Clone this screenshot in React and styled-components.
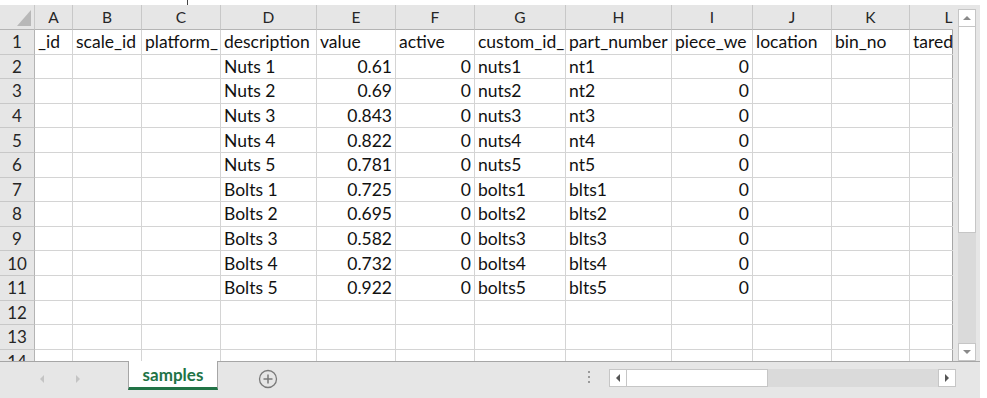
import React from "react";
import styled, { createGlobalStyle } from "styled-components";

const columns = [
  { key: "A", width: 38 },
  { key: "B", width: 69 },
  { key: "C", width: 79 },
  { key: "D", width: 96 },
  { key: "E", width: 79 },
  { key: "F", width: 79 },
  { key: "G", width: 91 },
  { key: "H", width: 106 },
  { key: "I", width: 81 },
  { key: "J", width: 79 },
  { key: "K", width: 78 },
  { key: "L", width: 78 },
];

const headings = ["_id", "scale_id", "platform_", "description", "value", "active", "custom_id_", "part_number", "piece_we", "location", "bin_no", "tared"];

const samples = [
  ["Nuts 1", "0.61", "nuts1", "nt1"],
  ["Nuts 2", "0.69", "nuts2", "nt2"],
  ["Nuts 3", "0.843", "nuts3", "nt3"],
  ["Nuts 4", "0.822", "nuts4", "nt4"],
  ["Nuts 5", "0.781", "nuts5", "nt5"],
  ["Bolts 1", "0.725", "bolts1", "blts1"],
  ["Bolts 2", "0.695", "bolts2", "blts2"],
  ["Bolts 3", "0.582", "bolts3", "blts3"],
  ["Bolts 4", "0.732", "bolts4", "blts4"],
  ["Bolts 5", "0.922", "bolts5", "blts5"],
];

// build every row as 12 cells: {text, num}
const rows = [
  headings.map((t) => ({ text: t })),
  ...samples.map(([desc, val, cid, part]) => [
    {}, {}, {},
    { text: desc },
    { text: val, num: true },
    { text: "0", num: true },
    { text: cid },
    { text: part },
    { text: "0", num: true },
    {}, {}, {},
  ]),
  ...[12, 13, 14].map(() => Array.from({ length: 12 }, () => ({}))),
];

const GlobalStyle = createGlobalStyle`
  body {
    margin: 0;
    background: #fff;
    font-family: Lato, "Open Sans", sans-serif;
  }
`;

const Window = styled.div`
  width: 980px;
  height: 398px;
  display: flex;
  flex-direction: column;
  background: #e6e6e6;
`;

const TopStrip = styled.div`
  height: 5px;
  background: #fff;
  display: flex;
`;

const Caret = styled.span`
  width: 1px;
  height: 5px;
  margin-left: 187px;
  background: #444;
`;

const Body = styled.div`
  height: 356px;
  display: flex;
`;

const Sheet = styled.div`
  width: 953px;
  overflow: hidden;
  background: #fff;
  box-shadow: inset -1px 0 #a6a6a6;
  display: grid;
  grid-template-columns: 35px ${columns.map((c) => c.width + "px").join(" ")};
  grid-template-rows: 25px;
  grid-auto-rows: 24.6px;
  align-content: start;
`;

const Cell = styled.div`
  box-sizing: border-box;
  border-right: 1px solid #d4d4d4;
  border-bottom: 1px solid #d4d4d4;
  padding: 0 3px;
  font-size: 17.5px;
  color: #111;
  white-space: nowrap;
  overflow: hidden;
  display: flex;
  align-items: center;
  justify-content: ${(p) => (p.$num ? "flex-end" : "flex-start")};
`;

const Heading = styled.div`
  box-sizing: border-box;
  background: #e6e6e6;
  border-right: 1px solid #c8c8c8;
  border-bottom: 1px solid #b4b4b4;
  font-size: 15.5px;
  color: #262626;
  display: flex;
  align-items: center;
  justify-content: center;
  overflow: hidden;
`;

const RowNumber = styled(Heading)`
  font-size: 17px;
  border-bottom: 1px solid #c8c8c8;
  border-right: 1px solid #b4b4b4;
`;

const Corner = styled(Heading)`
  justify-content: flex-end;
  align-items: flex-end;
  padding: 0 3px 3px 0;
`;

const VScroll = styled.div`
  width: 27px;
  display: flex;
  flex-direction: column;
  padding: 4px 4px 0 5px;
  box-sizing: border-box;
`;

const ScrollButton = styled.div`
  box-sizing: border-box;
  width: 18px;
  height: 18px;
  background: #fff;
  border: 1px solid #c6c6c6;
  display: flex;
  align-items: center;
  justify-content: center;
  flex-shrink: 0;
`;

const VThumb = styled.div`
  box-sizing: border-box;
  height: 206px;
  background: #fff;
  border: 1px solid #c6c6c6;
  border-top: none;
`;

const VTrack = styled.div`
  flex: 1;
  background: #dadada;
`;

const Footer = styled.div`
  flex: 1;
  display: flex;
  align-items: flex-start;
  border-top: 1px solid #a6a6a6;
`;

const Nav = styled.div`
  width: 128px;
  height: 34px;
  display: flex;
  align-items: center;
  gap: 28px;
  padding-left: 38px;
  box-sizing: border-box;
`;

const Tab = styled.div`
  box-sizing: border-box;
  width: 90px;
  height: 29px;
  margin-top: -1px;
  background: #fff;
  border-left: 1px solid #a6a6a6;
  border-right: 1px solid #a6a6a6;
  border-bottom: 3px solid #217346;
  color: #217346;
  font-weight: 700;
  font-size: 17px;
  display: flex;
  align-items: center;
  justify-content: center;
`;

const AddSheet = styled.div`
  margin: 7px 0 0 40px;
  display: flex;
`;

const HScroll = styled.div`
  margin: 7px 0 0 310px;
  display: flex;
  align-items: center;
`;

const Splitter = styled.div`
  width: 2px;
  height: 14px;
  margin-right: 19px;
  background: repeating-linear-gradient(#9a9a9a 0 2px, transparent 2px 5px);
`;

const HThumb = styled.div`
  box-sizing: border-box;
  width: 141px;
  height: 18px;
  background: #fff;
  border: 1px solid #c6c6c6;
  border-left: none;
`;

const HTrack = styled.div`
  width: 170px;
  height: 18px;
  background: #dadada;
`;

const Arrow = ({ dir, color = "#8a8a8a", size = 8 }) => {
  const pts = {
    up: "0,6 4,2 8,6",
    down: "0,2 4,6 8,2",
    left: "6,0 2,4 6,8",
    right: "2,0 6,4 2,8",
  }[dir];
  return (
    <svg width={size} height={size} viewBox="0 0 8 8">
      <polygon points={pts} fill={color} />
    </svg>
  );
};

export default function App() {
  return (
    <>
      <GlobalStyle />
      <Window>
        <TopStrip>
          <Caret />
        </TopStrip>
        <Body>
          <Sheet>
            <Corner>
              <svg width="14" height="16" viewBox="0 0 14 16">
                <polygon points="14,0 14,16 0,16" fill="#b8b8b8" />
              </svg>
            </Corner>
            {columns.map((c) => (
              <Heading key={c.key}>{c.key}</Heading>
            ))}
            {rows.map((cells, r) => (
              <React.Fragment key={r}>
                <RowNumber>{r + 1}</RowNumber>
                {cells.map((cell, c) => (
                  <Cell key={c} $num={cell.num}>
                    {cell.text}
                  </Cell>
                ))}
              </React.Fragment>
            ))}
          </Sheet>
          <VScroll>
            <ScrollButton>
              <Arrow dir="up" />
            </ScrollButton>
            <VThumb />
            <VTrack />
            <ScrollButton>
              <Arrow dir="down" />
            </ScrollButton>
          </VScroll>
        </Body>
        <Footer>
          <Nav>
            <Arrow dir="left" color="#c4c4c4" />
            <Arrow dir="right" color="#c4c4c4" />
          </Nav>
          <Tab>samples</Tab>
          <AddSheet>
            <svg width="20" height="20" viewBox="0 0 20 20">
              <circle cx="10" cy="10" r="8.5" fill="none" stroke="#7a7a7a" strokeWidth="1.3" />
              <path d="M10 5.5v9M5.5 10h9" stroke="#7a7a7a" strokeWidth="1.5" />
            </svg>
          </AddSheet>
          <HScroll>
            <Splitter />
            <ScrollButton>
              <Arrow dir="left" color="#555" />
            </ScrollButton>
            <HThumb />
            <HTrack />
            <ScrollButton>
              <Arrow dir="right" color="#555" />
            </ScrollButton>
          </HScroll>
        </Footer>
      </Window>
    </>
  );
}
